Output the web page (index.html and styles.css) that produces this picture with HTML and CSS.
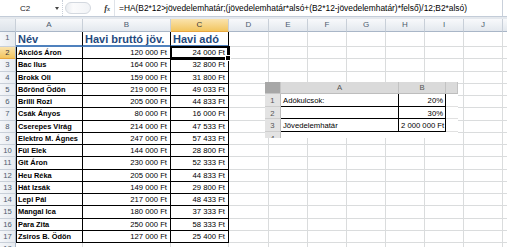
FILE: index.html
```html
<!DOCTYPE html>
<html>

<head>
    <meta charset="UTF-8">
    <title>Havi adó</title>
    <link rel="stylesheet" href="styles.css">
</head>

<body>
<div class="formula-bar">
    <div class="name-box"><span>C2</span><span class="drop"></span></div>
    <div class="fx-tools"><span class="grip"></span><span class="fx">f<small>x</small></span></div>
    <div class="formula">=HA(B2*12&gt;jövedelemhatár;(jövedelemhatár*alsó+(B2*12-jövedelemhatár)*felső)/12;B2*alsó)</div>
    <div class="expand"></div>
</div>

<div class="sheet">
    <div class="row col-head">
        <span class="corner"></span><span>A</span><span>B</span><span class="on">C</span><span>D</span><span>E</span><span>F</span><span>G</span><span>H</span><span>I</span><span>J</span><span></span>
    </div>
    <div class="row heading">
        <span class="rh">1</span><span class="h">Név</span><span class="h">Havi bruttó jöv.</span><span class="h">Havi adó</span><span></span><span></span><span></span><span></span><span></span><span></span><span></span><span></span>
    </div>
    <div class="row">
        <span class="rh on">2</span><span class="t name">Akciós Áron</span><span class="t num">120 000 Ft</span><span class="t num sel">24 000 Ft</span><span></span><span></span><span></span><span></span><span></span><span></span><span></span><span></span>
    </div>
    <div class="row">
        <span class="rh">3</span><span class="t name">Bac Ilus</span><span class="t num">164 000 Ft</span><span class="t num">32 800 Ft</span><span></span><span></span><span></span><span></span><span></span><span></span><span></span><span></span>
    </div>
    <div class="row">
        <span class="rh">4</span><span class="t name">Brokk Oli</span><span class="t num">159 000 Ft</span><span class="t num">31 800 Ft</span><span></span><span></span><span></span><span></span><span></span><span></span><span></span><span></span>
    </div>
    <div class="row">
        <span class="rh">5</span><span class="t name">Bőrönd Ödön</span><span class="t num">219 000 Ft</span><span class="t num">49 033 Ft</span><span></span><span></span><span></span><span></span><span></span><span></span><span></span><span></span>
    </div>
    <div class="row">
        <span class="rh">6</span><span class="t name">Brilli Rozi</span><span class="t num">205 000 Ft</span><span class="t num">44 833 Ft</span><span></span><span></span><span></span><span></span><span></span><span></span><span></span><span></span>
    </div>
    <div class="row">
        <span class="rh">7</span><span class="t name">Csák Ányos</span><span class="t num">80 000 Ft</span><span class="t num">16 000 Ft</span><span></span><span></span><span></span><span></span><span></span><span></span><span></span><span></span>
    </div>
    <div class="row">
        <span class="rh">8</span><span class="t name">Cserepes Virág</span><span class="t num">214 000 Ft</span><span class="t num">47 533 Ft</span><span></span><span></span><span></span><span></span><span></span><span></span><span></span><span></span>
    </div>
    <div class="row">
        <span class="rh">9</span><span class="t name">Elektro M. Ágnes</span><span class="t num">247 000 Ft</span><span class="t num">57 433 Ft</span><span></span><span></span><span></span><span></span><span></span><span></span><span></span><span></span>
    </div>
    <div class="row">
        <span class="rh">10</span><span class="t name">Fül Elek</span><span class="t num">144 000 Ft</span><span class="t num">28 800 Ft</span><span></span><span></span><span></span><span></span><span></span><span></span><span></span><span></span>
    </div>
    <div class="row">
        <span class="rh">11</span><span class="t name">Git Áron</span><span class="t num">230 000 Ft</span><span class="t num">52 333 Ft</span><span></span><span></span><span></span><span></span><span></span><span></span><span></span><span></span>
    </div>
    <div class="row">
        <span class="rh">12</span><span class="t name">Heu Réka</span><span class="t num">205 000 Ft</span><span class="t num">44 833 Ft</span><span></span><span></span><span></span><span></span><span></span><span></span><span></span><span></span>
    </div>
    <div class="row">
        <span class="rh">13</span><span class="t name">Hát Izsák</span><span class="t num">149 000 Ft</span><span class="t num">29 800 Ft</span><span></span><span></span><span></span><span></span><span></span><span></span><span></span><span></span>
    </div>
    <div class="row">
        <span class="rh">14</span><span class="t name">Lepi Pál</span><span class="t num">217 000 Ft</span><span class="t num">48 433 Ft</span><span></span><span></span><span></span><span></span><span></span><span></span><span></span><span></span>
    </div>
    <div class="row">
        <span class="rh">15</span><span class="t name">Mangal Ica</span><span class="t num">180 000 Ft</span><span class="t num">37 333 Ft</span><span></span><span></span><span></span><span></span><span></span><span></span><span></span><span></span>
    </div>
    <div class="row">
        <span class="rh">16</span><span class="t name">Para Zita</span><span class="t num">250 000 Ft</span><span class="t num">58 333 Ft</span><span></span><span></span><span></span><span></span><span></span><span></span><span></span><span></span>
    </div>
    <div class="row">
        <span class="rh">17</span><span class="t name">Zsiros B. Ödön</span><span class="t num">127 000 Ft</span><span class="t num">25 400 Ft</span><span></span><span></span><span></span><span></span><span></span><span></span><span></span><span></span>
    </div>
    <div class="row">
        <span class="rh">18</span><span></span><span></span><span></span><span></span><span></span><span></span><span></span><span></span><span></span><span></span><span></span>
    </div>

    <!-- pasted picture of the parameter sheet -->
    <div class="pasted">
        <span class="p-corner"></span><span class="p-head">A</span><span class="p-head">B</span><span class="p-head"></span>
        <span class="p-rh">1</span><span class="p-cell">Adókulcsok:</span><span class="p-cell num">20%</span><span class="p-rest"></span>
        <span class="p-rh">2</span><span class="p-cell"></span><span class="p-cell num">30%</span><span class="p-rest"></span>
        <span class="p-rh">3</span><span class="p-cell">Jövedelemhatár</span><span class="p-cell num">2 000 000 Ft</span><span class="p-rest"></span>
        <span class="p-rh cut">4</span><span class="p-blank"></span><span class="p-blank"></span><span class="p-blank"></span>
    </div>
</div>
</body>

</html>
```

FILE: styles.css
```css
* {
    box-sizing: border-box;
}

body {
    margin: 0;
    width: 507px;
    height: 247px;
    overflow: hidden;
    background: #fff;
    font-family: "Liberation Sans", Arial, sans-serif;
    color: #000;
}

/* formula bar */
.formula-bar {
    display: flex;
    height: 17px;
    border-bottom: 1px solid #c3ccd8;
    background: #fff;
}

.name-box {
    width: 62px;
    display: flex;
    align-items: center;
    justify-content: space-between;
    padding: 0 3px 0 20px;
    font-size: 8px;
    color: #222;
}

.drop {
    width: 0;
    height: 0;
    border-left: 2.5px solid transparent;
    border-right: 2.5px solid transparent;
    border-top: 3px solid #444;
}

.fx-tools {
    width: 52px;
    display: flex;
    align-items: center;
    justify-content: space-between;
    padding: 0 4px 0 2px;
    border-left: 1px dotted #c7ced8;
}

.grip {
    width: 26px;
    height: 12px;
    border: 1px solid #d3d8df;
    border-radius: 6px;
    background: linear-gradient(90deg, #e9ecf0, #fbfbfc 30%, #f1f3f6);
}

.fx {
    font-family: "Liberation Serif", serif;
    font-style: italic;
    font-weight: bold;
    font-size: 8.5px;
    color: #333;
}

.fx small {
    font-size: 6px;
}

.formula {
    flex: 1;
    padding-left: 4px;
    font-size: 8.4px;
    line-height: 16px;
    white-space: nowrap;
    overflow: hidden;
    border-left: 1px solid #dfe3e9;
}

.expand {
    width: 5px;
    border-left: 1px solid #c9d0da;
}

/* worksheet */
.sheet {
    position: relative;
    border-top: 2px solid #e4e8ed;
}

.row {
    display: grid;
    grid-template-columns: 16px 67px 88px 58px 40px repeat(6, 39px) 1fr;
    height: 12.25px;
}

.row > span {
    border-right: 1px solid #dadcdd;
    border-bottom: 1px solid #dadcdd;
    padding: 0 2px;
    font-size: 7.7px;
    line-height: 11px;
    white-space: nowrap;
    overflow: hidden;
}

.col-head {
    height: 13px;
}

.col-head > span {
    background: linear-gradient(#f8f9fb, #e3e8ee);
    border-right-color: #c8cfd8;
    border-bottom-color: #a9b6c7;
    text-align: center;
    color: #4d5b6e;
    font-size: 8px;
    line-height: 12px;
}

.col-head .corner {
    background: linear-gradient(#eef1f5, #dde3ea);
}

.col-head .on,
.row .rh.on {
    background: linear-gradient(#fae3ad, #f2c55f);
    border-bottom-color: #e6a63f;
    color: #3a3a3a;
}

.row .rh {
    background: linear-gradient(90deg, #f4f6f9, #e6eaef);
    border-right-color: #a9b6c7;
    border-bottom-color: #c8cfd8;
    text-align: center;
    color: #4d5b6e;
    padding: 0;
}

.heading {
    height: 15px;
}

.heading .h {
    font-size: 11px;
    font-weight: bold;
    line-height: 14px;
    color: #1f497d;
    border-right-color: #000;
    border-bottom: 2px solid #4f81bd;
}

.row .t {
    border-right-color: #000;
    border-bottom-color: #000;
}

.row .rh + .t {
    box-shadow: inset 1px 0 #000;
}

.row .name {
    font-weight: bold;
    font-size: 7.4px;
    padding-left: 2px;
}

.num {
    text-align: right;
}

.row .num {
    padding-right: 3px;
}

.row .sel {
    position: relative;
    overflow: visible;
    box-shadow: 0 0 0 1px #000, inset 0 0 0 1px #000;
}

.sel::after {
    content: "";
    position: absolute;
    right: -3px;
    bottom: -3px;
    width: 4px;
    height: 4px;
    background: #000;
    border: 1px solid #fff;
}

/* pasted picture */
.pasted {
    position: absolute;
    left: 265px;
    top: 63px;
    display: grid;
    grid-template-columns: 16px 118px 47px 12px;
    grid-template-rows: 12px 13px 12px 13px 6px;
    background: #fff;
    font-size: 7.7px;
    line-height: 11px;
}

.pasted > span {
    white-space: nowrap;
    overflow: hidden;
}

.p-corner {
    background: #a7a7a7;
    border-right: 1px solid #c6c6c6;
    border-bottom: 1px solid #c6c6c6;
}

.p-head {
    background: #dadada;
    border-right: 1px solid #c2c2c2;
    border-bottom: 1px solid #bdbdbd;
    text-align: center;
    color: #555;
}

.p-rh {
    background: #e3e3e3;
    border-right: 1px solid #bdbdbd;
    border-bottom: 1px solid #cdcdcd;
    text-align: center;
    color: #555;
    padding-top: 1px;
}

.p-rh.cut {
    border-bottom: 0;
}

.p-cell {
    border-right: 1px solid #000;
    border-bottom: 1px solid #000;
    padding: 1px 2px 0;
}

.p-rest {
    border-bottom: 1px solid #e1e1e1;
}
```
